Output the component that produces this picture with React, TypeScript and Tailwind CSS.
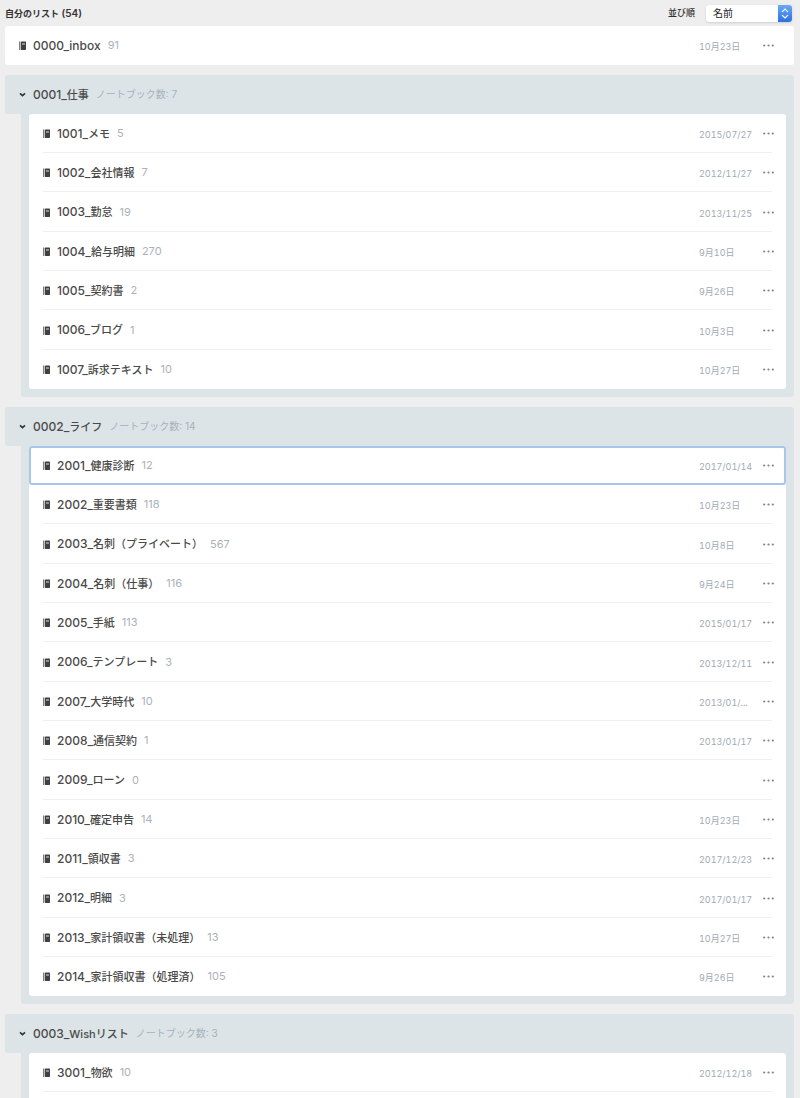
import React from 'react';

interface Notebook {
  code: string;
  title: string;
  count: number;
  date?: string;
  selected?: boolean;
}

interface Stack {
  code: string;
  title: string;
  total: number;
  notebooks: Notebook[];
}

const inbox: Notebook = { code: '0000_inbox', title: '', count: 91, date: '10月23日' };

const stacks: Stack[] = [
  {
    code: '0001_',
    title: '仕事',
    total: 7,
    notebooks: [
      { code: '1001_', title: 'メモ', count: 5, date: '2015/07/27' },
      { code: '1002_', title: '会社情報', count: 7, date: '2012/11/27' },
      { code: '1003_', title: '勤怠', count: 19, date: '2013/11/25' },
      { code: '1004_', title: '給与明細', count: 270, date: '9月10日' },
      { code: '1005_', title: '契約書', count: 2, date: '9月26日' },
      { code: '1006_', title: 'ブログ', count: 1, date: '10月3日' },
      { code: '1007_', title: '訴求テキスト', count: 10, date: '10月27日' },
    ],
  },
  {
    code: '0002_',
    title: 'ライフ',
    total: 14,
    notebooks: [
      { code: '2001_', title: '健康診断', count: 12, date: '2017/01/14', selected: true },
      { code: '2002_', title: '重要書類', count: 118, date: '10月23日' },
      { code: '2003_', title: '名刺（プライベート）', count: 567, date: '10月8日' },
      { code: '2004_', title: '名刺（仕事）', count: 116, date: '9月24日' },
      { code: '2005_', title: '手紙', count: 113, date: '2015/01/17' },
      { code: '2006_', title: 'テンプレート', count: 3, date: '2013/12/11' },
      { code: '2007_', title: '大学時代', count: 10, date: '2013/01/...' },
      { code: '2008_', title: '通信契約', count: 1, date: '2013/01/17' },
      { code: '2009_', title: 'ローン', count: 0 },
      { code: '2010_', title: '確定申告', count: 14, date: '10月23日' },
      { code: '2011_', title: '領収書', count: 3, date: '2017/12/23' },
      { code: '2012_', title: '明細', count: 3, date: '2017/01/17' },
      { code: '2013_', title: '家計領収書（未処理）', count: 13, date: '10月27日' },
      { code: '2014_', title: '家計領収書（処理済）', count: 105, date: '9月26日' },
    ],
  },
  {
    code: '0003_',
    title: 'Wishリスト',
    total: 3,
    notebooks: [{ code: '3001_', title: '物欲', count: 10, date: '2012/12/18' }],
  },
];

const NotebookIcon: React.FC = () => (
  <svg className="h-[9px] w-[7px] shrink-0" viewBox="0 0 7 9" aria-hidden="true">
    <rect x="0" y="0.5" width="1.3" height="8.5" fill="#7d7d7d" />
    <rect x="1.9" y="0.5" width="5.1" height="8.5" rx="0.7" fill="#404040" />
    <rect x="3" y="2.4" width="3" height="1.2" fill="#c4c4c4" />
  </svg>
);

const Name: React.FC<{ code: string; title: string }> = ({ code, title }) => (
  <span className="whitespace-nowrap text-[12px] font-medium text-[#4a4a4a]">
    {code}
    {title && <span className="text-[11px]">{title}</span>}
  </span>
);

const NotebookRow: React.FC<{ notebook: Notebook }> = ({ notebook }) => (
  <>
    <NotebookIcon />
    <a href="#" className="ml-[7px] flex min-w-0 items-center gap-[7px]">
      <Name code={notebook.code} title={notebook.title} />
      <span className="text-[11px] text-[#a9b2ba]">{notebook.count}</span>
    </a>
    <span className="ml-auto w-16 shrink-0 pt-[3px] text-[9px] tabular-nums text-[#a0abb4]">{notebook.date}</span>
    <button type="button" aria-label="その他" className="flex h-5 w-3 shrink-0 items-center">
      <svg className="h-[3px] w-[11px]" viewBox="0 0 11 3" fill="#808080" aria-hidden="true">
        <circle cx="1.2" cy="1.5" r="1.1" />
        <circle cx="5.5" cy="1.5" r="1.1" />
        <circle cx="9.8" cy="1.5" r="1.1" />
      </svg>
    </button>
  </>
);

const StackSection: React.FC<{ stack: Stack }> = ({ stack }) => {
  const partial = stack.notebooks.length < stack.total;

  return (
    <section className="mt-[10px]">
      <h2 className="flex h-[39px] items-center rounded-t-[3px] rounded-bl-[3px] bg-[#dce4e7] pl-[14px]">
        <button type="button" className="flex items-center" aria-expanded="true">
          <svg className="h-[7px] w-[7px]" viewBox="0 0 7 7" fill="none" stroke="#333" strokeWidth="1.6" aria-hidden="true">
            <path d="M1 2.3 L3.5 4.7 L6 2.3" />
          </svg>
          <span className="ml-[7px] flex items-center gap-[7px]">
            <Name code={stack.code} title={stack.title} />
            <span className="whitespace-nowrap text-[10px] font-normal text-[#a6b2bd]">ノートブック数: {stack.total}</span>
          </span>
        </button>
      </h2>
      <div className="ml-4 rounded-b-[3px] bg-[#dce4e7] px-2 pb-2">
        <ul className={`rounded-[3px] bg-white ${partial ? 'pb-10' : ''}`}>
          {stack.notebooks.map((notebook, i) => (
            <li
              key={notebook.code}
              className={`h-[39px] px-[14px] nth-[3n]:h-10 ${notebook.selected ? 'rounded-[3px] ring-2 ring-inset ring-[#a6c8e8]' : ''}`}
            >
              <div
                className={`-mr-[3px] flex h-full items-center bg-[linear-gradient(#efefef,#efefef)] bg-[length:calc(100%-3px)_1px] bg-bottom-left bg-no-repeat ${
                  notebook.selected || (!partial && i === stack.notebooks.length - 1) ? 'bg-none' : ''
                }`}
              >
                <NotebookRow notebook={notebook} />
              </div>
            </li>
          ))}
        </ul>
      </div>
    </section>
  );
};

const App: React.FC = () => {
  return (
    <div
      lang="ja"
      className="h-screen overflow-hidden bg-[#eeeeee] pl-[5px] pr-[6px] font-['Inter','Noto_Sans_CJK_JP',sans-serif]"
    >
      <header className="flex h-[26px] items-center justify-between">
        <h1 className="text-[10px] font-semibold text-[#333]">
          <span className="text-[9px]">自分のリスト</span> (54)
        </h1>
        <div className="flex items-center gap-[11px] pr-[2px]">
          <label htmlFor="sort" className="text-[9px] font-medium text-[#333]">
            並び順
          </label>
          <div className="relative flex">
            <select
              id="sort"
              defaultValue="name"
              className="h-[17px] w-[86px] appearance-none rounded-[3px] bg-white pl-[7px] text-[10px] leading-none text-[#222] shadow-sm"
            >
              <option value="name">名前</option>
              <option value="date">更新日</option>
            </select>
            <svg className="pointer-events-none absolute right-0 top-0 h-[17px] w-[14px]" viewBox="0 0 14 17" aria-hidden="true">
              <defs>
                <linearGradient id="stepper" x1="0" y1="0" x2="0" y2="1">
                  <stop offset="0" stopColor="#6aaaf4" />
                  <stop offset="1" stopColor="#2c70e2" />
                </linearGradient>
              </defs>
              <path d="M0 0 H11 A3 3 0 0 1 14 3 V14 A3 3 0 0 1 11 17 H0 Z" fill="url(#stepper)" />
              <path d="M4.3 6.6 L7 4 L9.7 6.6 M4.3 10.4 L7 13 L9.7 10.4" fill="none" stroke="#fff" strokeWidth="1.2" strokeLinecap="round" />
            </svg>
          </div>
        </div>
      </header>
      <main>
        <div className="flex h-[39px] items-center rounded-[3px] bg-white pl-[14px] pr-[19px]">
          <NotebookRow notebook={inbox} />
        </div>
        {stacks.map((stack) => (
          <StackSection key={stack.code} stack={stack} />
        ))}
      </main>
    </div>
  );
};

export default App;
